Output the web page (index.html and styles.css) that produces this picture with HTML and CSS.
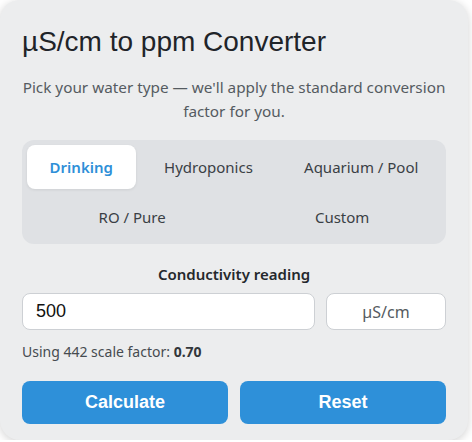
FILE: index.html
```html
<!DOCTYPE html>
<html lang="en">
<head>
    <meta charset="UTF-8">
    <meta name="viewport" content="width=device-width, initial-scale=1.0">
    <title>µS/cm to ppm Converter</title>
    <link rel="stylesheet" href="styles.css">
</head>
<body>
    <div class="card">
        <h1>µS/cm to ppm Converter</h1>
        <p class="intro">Pick your water type — we'll apply the standard conversion factor for you.</p>

        <div class="tabs">
            <button class="tab active">Drinking</button>
            <button class="tab">Hydroponics</button>
            <button class="tab">Aquarium / Pool</button>
            <button class="tab">RO / Pure</button>
            <button class="tab">Custom</button>
        </div>

        <label class="field-label" for="reading">Conductivity reading</label>
        <div class="input-row">
            <input type="text" id="reading" value="500">
            <div class="unit">µS/cm</div>
        </div>
        <p class="note">Using 442 scale factor: <strong>0.70</strong></p>

        <div class="actions">
            <button class="btn">Calculate</button>
            <button class="btn">Reset</button>
        </div>
    </div>
</body>
</html>
```

FILE: styles.css
```css
* {
    margin: 0;
    padding: 0;
    box-sizing: border-box;
}

body {
    font-family: 'Noto Sans', sans-serif;
    background: #ffffff;
}

.card {
    width: 468px;
    height: 440px;
    background: #ecedee;
    border-radius: 20px;
    padding: 25px 22px 16px;
    box-shadow: 0 2px 10px rgba(0, 0, 0, 0.18);
}

h1 {
    font-family: 'Liberation Sans', Arial, sans-serif;
    font-weight: normal;
    font-size: 28px;
    line-height: 34px;
    color: #1f2429;
}

.intro {
    margin-top: 16px;
    font-size: 15.3px;
    line-height: 24px;
    color: #555b61;
    text-align: center;
}

.tabs {
    margin-top: 17px;
    background: #dfe1e4;
    border-radius: 12px;
    padding: 5px;
    display: flex;
    flex-wrap: wrap;
    gap: 6px;
}

.tab {
    flex: 1 1 auto;
    height: 44px;
    padding: 0 20px;
    border: none;
    border-radius: 8px;
    background: transparent;
    font-family: 'Noto Sans', sans-serif;
    font-size: 15px;
    color: #3a3f45;
    cursor: pointer;
}

.tab.active {
    background: #ffffff;
    color: #2e8fd8;
    font-weight: 600;
    box-shadow: 0 1px 3px rgba(0, 0, 0, 0.08);
}

.field-label {
    display: block;
    margin-top: 19px;
    font-size: 15px;
    line-height: 22px;
    font-weight: 600;
    color: #24282c;
    text-align: center;
}

.input-row {
    display: flex;
    gap: 11px;
    margin-top: 8px;
}

#reading {
    flex: 1;
    height: 37px;
    padding: 0 13px;
    border: 1px solid #cdd0d4;
    border-radius: 8px;
    background: #ffffff;
    font-family: 'Liberation Sans', Arial, sans-serif;
    font-size: 18px;
    color: #111111;
    outline: none;
}

.unit {
    width: 120px;
    height: 37px;
    border: 1px solid #cdd0d4;
    border-radius: 8px;
    background: #ffffff;
    display: flex;
    align-items: center;
    justify-content: center;
    font-size: 16px;
    color: #555b61;
}

.note {
    margin-top: 12px;
    font-size: 14px;
    line-height: 20px;
    color: #464b50;
}

.note strong {
    color: #33373b;
}

.actions {
    display: flex;
    gap: 12px;
    margin-top: 19px;
}

.btn {
    flex: 1;
    height: 43px;
    border: none;
    border-radius: 8px;
    background: #2e90d9;
    color: #ffffff;
    font-family: 'Liberation Sans', Arial, sans-serif;
    font-size: 18px;
    font-weight: bold;
    cursor: pointer;
}
```
